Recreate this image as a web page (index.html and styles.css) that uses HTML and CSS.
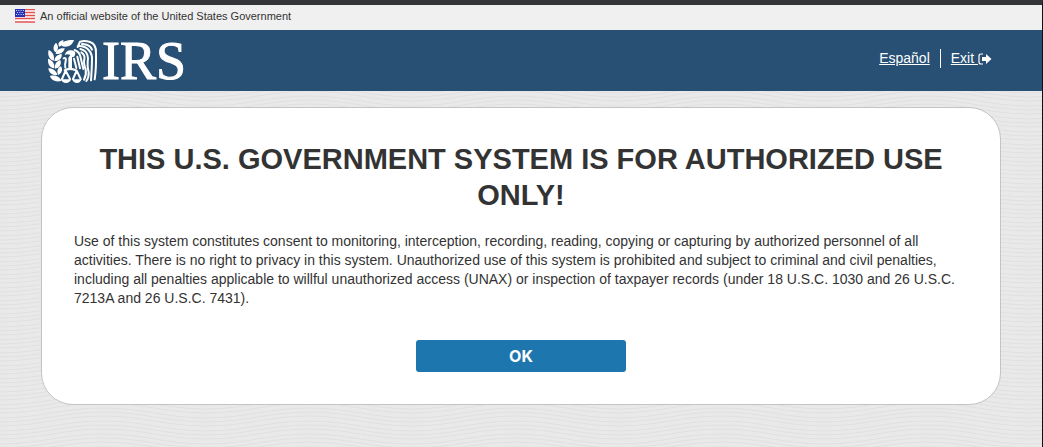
FILE: index.html
```html
<!DOCTYPE html>
<html lang="en">
    <head>
        <meta charset="utf-8">
        <title>Authorized Use Only</title>
        <link rel="stylesheet" href="styles.css">
    </head>
    <body>
      <div class="page">
        <div class="banner">
          <svg class="flag" viewBox="0 0 20 14" aria-hidden="true">
            <rect width="20" height="14" fill="#fff"/>
            <path d="M0 .5h20M0 3.5h20M0 6.5h20M0 9.5h20M0 13h20" stroke="#e2504c" stroke-width="1.4"/>
            <rect width="10" height="8" fill="#2433b8"/>
            <path d="M1 1.5h8M2 3.5h7M1 5.5h8" stroke="#d5d9fa" stroke-width="1" stroke-dasharray="1 1.3"/>
          </svg>
          <span>An official website of the United States Government</span>
        </div>

        <header class="header">
          <a class="logo" href="#" aria-label="IRS">
            <!-- Laurel branch, eagle and scales -->
            <svg class="seal" viewBox="0 0 162 144" aria-hidden="true">
              <g fill="#fff">
                <path d="M47 27C45 14 63 7 84 9C79 25 64 33 47 27Z"/>
                <path d="M40 29C33 20 40 12 52 9C54 18 50 26 40 29Z"/>
                <path d="M29 46C18 37 23 24 30 17C38 26 38 37 29 46Z"/>
                <path d="M29 50C31 37 43 33 56 34C54 46 43 53 29 50Z"/>
                <path d="M23 71C7 67 5 51 8 39C20 45 27 57 23 71Z"/>
                <path d="M25 72C26 58 35 53 47 50C49 64 39 73 25 72Z"/>
                <path d="M25 94C9 93 5 77 6 65C19 69 27 80 25 94Z"/>
                <path d="M27 95C25 80 32 73 43 69C48 82 40 94 27 95Z"/>
                <path d="M34 114C18 117 8 106 7 94C20 94 31 101 34 114Z"/>
                <path d="M36 114C32 101 35 92 45 88C52 99 47 109 36 114Z"/>
                <path d="M47 131C31 137 16 130 12 117C27 113 40 119 47 131Z"/>
                <path d="M56 54C59 44 66 39 76 40C89 40 91 52 84 59L78 61V94H67V62L73 54C66 51 61 52 56 54Z"/>
                <path d="M53 98Q72 87 93 98L92 104Q72 94 54 104Z"/>
                <path d="M44 127H76Q71 138 60 138Q49 138 44 127ZM78 127H107Q103 138 93 138Q82 138 78 127Z"/>
              </g>
              <g fill="none" stroke="#fff" stroke-width="6" stroke-linecap="round" stroke-linejoin="round">
                <path d="M59 101L48 126M59 101L72 126M92 101L81 126M92 101L104 126"/>
                <path d="M53 64Q62 61 59 72Q56 83 58 92"/>
                <path d="M86 39Q100 44 103 58L112 96M84 65L91 93M94 59L102 94"/>
                <path d="M95 30L102 14Q116 10 132 15Q151 21 150 48Q151 95 146 127"/>
                <path d="M99 27Q118 27 128 39Q139 51 138 68Q137 105 135 130"/>
                <path d="M103 36Q124 40 126 63Q123 88 128 106Q129 122 121 132"/>
                <path d="M106 46Q118 54 115 67Q112 80 119 97Q122 113 114 128"/>
                <path d="M108 21Q133 22 138 38"/>
              </g>
            </svg>
            <span class="logo-text">IRS</span>
          </a>
          <nav class="nav">
            <a href="#" lang="es">Español</a>
            <a class="exit" href="#">Exit <svg class="exit-icon" viewBox="0 0 14 12" aria-hidden="true">
              <path d="M5 1H3Q1 1 1 3V9Q1 11 3 11H5" fill="none" stroke="#fff" stroke-width="1.2"/>
              <path d="M4 4H8V1L13.5 6L8 11V8H4Z" fill="#fff"/>
            </svg></a>
          </nav>
        </header>

        <main class="content">
          <section class="card">
            <h1>THIS U.S. GOVERNMENT SYSTEM IS FOR AUTHORIZED USE ONLY!</h1>
            <p>Use of this system constitutes consent to monitoring, interception, recording, reading, copying or capturing by authorized personnel of all activities. There is no right to privacy in this system. Unauthorized use of this system is prohibited and subject to criminal and civil penalties, including all penalties applicable to willful unauthorized access (UNAX) or inspection of taxpayer records (under 18 U.S.C. 1030 and 26 U.S.C. 7213A and 26 U.S.C. 7431).</p>
            <button class="ok-button" type="button">OK</button>
          </section>
        </main>
      </div>
    </body>
</html>
```

FILE: styles.css
```css
* {
  box-sizing: border-box;
}

body {
  margin: 0;
  font-family: "Liberation Sans", Arial, sans-serif;
  font-size: 14px;
  color: #333;
}

.page {
  min-height: 100vh;
  border-top: 5px solid #343538;
  border-right: 1px solid #111;
  background-color: #e9e9e9;
  /* Thin wavy lines */
  background-image: url("data:image/svg+xml,%3Csvg xmlns='http://www.w3.org/2000/svg' width='206' height='13' viewBox='0 0 206 13'%3E%3Cpath fill='none' stroke='%23e0e0e0' d='M0 1c40 0 63-10 103-10s63 10 103 10M0 5c40 0 63-10 103-10s63 10 103 10M0 10c40 0 63-10 103-10s63 10 103 10M0 14c40 0 63-10 103-10s63 10 103 10M0 18c40 0 63-10 103-10s63 10 103 10M0 23c40 0 63-10 103-10s63 10 103 10'/%3E%3C/svg%3E");
}

/* Government banner */
.banner {
  display: flex;
  align-items: center;
  gap: 5px;
  height: 25px;
  padding: 0 15px 3px;
  background: #f0f0f0;
  font-size: 11px;
}

.flag {
  width: 20px;
  height: 14px;
}

/* Header with logo and links */
.header {
  display: flex;
  align-items: center;
  justify-content: space-between;
  height: 61px;
  padding: 0 50px 0 46px;
  background: #285074;
}

.logo {
  display: flex;
  align-items: center;
  gap: 2px;
  color: #fff;
  text-decoration: none;
}

.seal {
  width: 54px;
  height: 48px;
}

.logo-text {
  font-family: "Liberation Serif", "Times New Roman", serif;
  font-size: 54px;
  line-height: 60px;
  -webkit-text-stroke: 1px #fff;
}

.nav {
  display: flex;
  align-items: center;
  padding-bottom: 4px;
}

.nav a {
  color: #fff;
  line-height: 19px;
}

.nav .exit {
  margin-left: 10px;
  padding-left: 10px;
  border-left: 1px solid #fff;
}

.exit-icon {
  width: 14px;
  height: 12px;
  vertical-align: -2px;
}

/* Warning card */
.content {
  padding: 16px 20px 42px;
}

.card {
  max-width: 960px;
  margin: 0 auto;
  padding: 33px 32px 32px;
  border: 1px solid #c4c4c4;
  border-radius: 32px;
  background: #fff;
}

.card h1 {
  margin: 0 0 19px;
  font-size: 29px;
  line-height: 36px;
  text-align: center;
}

.card p {
  margin: 0 0 32px;
  line-height: 19px;
}

.ok-button {
  display: block;
  width: 210px;
  height: 32px;
  margin: 0 auto;
  border: 0;
  border-radius: 3px;
  background: #1d76ad;
  color: #fff;
  font-family: Inter, sans-serif;
  font-size: 16px;
  font-weight: bold;
  cursor: pointer;
}

.ok-button:hover {
  background: #155d8a;
}
```
